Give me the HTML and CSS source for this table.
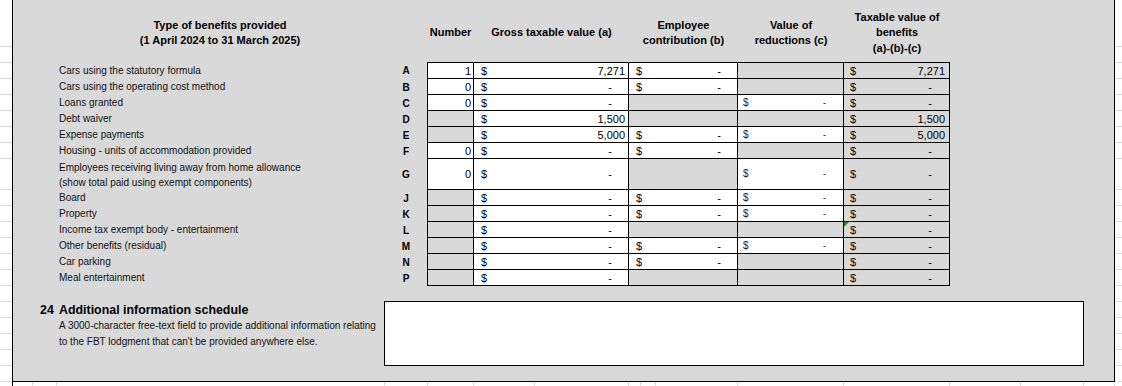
FILE: index.html
```html
<!DOCTYPE html>
<html lang="en">
<head>
<meta charset="utf-8">
<title>FBT benefits schedule</title>
<link rel="stylesheet" href="styles.css">
</head>
<body>
<div class="sheet">
  <div class="top">
    <div class="gutter">
      <div class="gr first"></div>
      <div class="gr"></div><div class="gr"></div><div class="gr"></div><div class="gr"></div><div class="gr"></div><div class="gr"></div><div class="gr"></div>
      <div class="gr tall"></div>
      <div class="gr"></div><div class="gr"></div><div class="gr"></div><div class="gr"></div><div class="gr"></div><div class="gr"></div>
      <div class="gr"></div><div class="gr"></div><div class="gr"></div><div class="gr"></div><div class="gr"></div><div class="gr"></div>
    </div>

    <div class="form">
      <div class="tbl">
        <div class="row head">
          <div class="h h-type">Type of benefits provided<br>(1 April 2024 to 31 March 2025)</div>
          <div class="h">Number</div>
          <div class="h">Gross taxable value (a)</div>
          <div class="h">Employee<br>contribution (b)</div>
          <div class="h">Value of<br>reductions (c)</div>
          <div class="h">Taxable value of<br>benefits<br>(a)-(b)-(c)</div>
        </div>

        <div class="row first">
          <div class="lbl">Cars using the statutory formula</div>
          <div class="let">A</div>
          <div class="c n w">1</div>
          <div class="c gv w"><span>$</span><span>7,271</span></div>
          <div class="c em w"><span>$</span><span class="d">-</span></div>
          <div class="c rd"></div>
          <div class="c tx"><span>$</span><span>7,271</span></div>
        </div>
        <div class="row">
          <div class="lbl">Cars using the operating cost method</div>
          <div class="let">B</div>
          <div class="c n w">0</div>
          <div class="c gv w"><span>$</span><span class="d">-</span></div>
          <div class="c em w"><span>$</span><span class="d">-</span></div>
          <div class="c rd"></div>
          <div class="c tx"><span>$</span><span class="d">-</span></div>
        </div>
        <div class="row">
          <div class="lbl">Loans granted</div>
          <div class="let">C</div>
          <div class="c n w">0</div>
          <div class="c gv w"><span>$</span><span class="d">-</span></div>
          <div class="c em"></div>
          <div class="c rd w"><span class="s">$</span><span class="d sm">-</span></div>
          <div class="c tx"><span>$</span><span class="d">-</span></div>
        </div>
        <div class="row">
          <div class="lbl">Debt waiver</div>
          <div class="let">D</div>
          <div class="c n"></div>
          <div class="c gv w"><span>$</span><span>1,500</span></div>
          <div class="c em"></div>
          <div class="c rd"></div>
          <div class="c tx"><span>$</span><span>1,500</span></div>
        </div>
        <div class="row">
          <div class="lbl">Expense payments</div>
          <div class="let">E</div>
          <div class="c n"></div>
          <div class="c gv w"><span>$</span><span>5,000</span></div>
          <div class="c em w"><span>$</span><span class="d">-</span></div>
          <div class="c rd w"><span class="s">$</span><span class="d sm">-</span></div>
          <div class="c tx"><span>$</span><span>5,000</span></div>
        </div>
        <div class="row">
          <div class="lbl">Housing - units of accommodation provided</div>
          <div class="let">F</div>
          <div class="c n w">0</div>
          <div class="c gv w"><span>$</span><span class="d">-</span></div>
          <div class="c em w"><span>$</span><span class="d">-</span></div>
          <div class="c rd"></div>
          <div class="c tx"><span>$</span><span class="d">-</span></div>
        </div>
        <div class="row tall">
          <div class="lbl two">Employees receiving living away from home allowance<br>(show total paid using exempt components)</div>
          <div class="let">G</div>
          <div class="c n w">0</div>
          <div class="c gv w"><span>$</span><span class="d">-</span></div>
          <div class="c em"></div>
          <div class="c rd w"><span class="s">$</span><span class="d sm">-</span></div>
          <div class="c tx"><span>$</span><span class="d">-</span></div>
        </div>
        <div class="row">
          <div class="lbl">Board</div>
          <div class="let">J</div>
          <div class="c n"></div>
          <div class="c gv w"><span>$</span><span class="d">-</span></div>
          <div class="c em w"><span>$</span><span class="d">-</span></div>
          <div class="c rd w"><span class="s">$</span><span class="d sm">-</span></div>
          <div class="c tx"><span>$</span><span class="d">-</span></div>
        </div>
        <div class="row">
          <div class="lbl">Property</div>
          <div class="let">K</div>
          <div class="c n"></div>
          <div class="c gv w"><span>$</span><span class="d">-</span></div>
          <div class="c em w"><span>$</span><span class="d">-</span></div>
          <div class="c rd w"><span class="s">$</span><span class="d sm">-</span></div>
          <div class="c tx"><span>$</span><span class="d">-</span></div>
        </div>
        <div class="row">
          <div class="lbl">Income tax exempt body - entertainment</div>
          <div class="let">L</div>
          <div class="c n"></div>
          <div class="c gv w"><span>$</span><span class="d">-</span></div>
          <div class="c em"></div>
          <div class="c rd"></div>
          <div class="c tx flag"><span>$</span><span class="d">-</span></div>
        </div>
        <div class="row">
          <div class="lbl">Other benefits (residual)</div>
          <div class="let">M</div>
          <div class="c n"></div>
          <div class="c gv w"><span>$</span><span class="d">-</span></div>
          <div class="c em w"><span>$</span><span class="d">-</span></div>
          <div class="c rd w"><span class="s">$</span><span class="d sm">-</span></div>
          <div class="c tx"><span>$</span><span class="d">-</span></div>
        </div>
        <div class="row">
          <div class="lbl">Car parking</div>
          <div class="let">N</div>
          <div class="c n"></div>
          <div class="c gv w"><span>$</span><span class="d">-</span></div>
          <div class="c em w"><span>$</span><span class="d">-</span></div>
          <div class="c rd"></div>
          <div class="c tx"><span>$</span><span class="d">-</span></div>
        </div>
        <div class="row">
          <div class="lbl">Meal entertainment</div>
          <div class="let">P</div>
          <div class="c n"></div>
          <div class="c gv w"><span>$</span><span class="d">-</span></div>
          <div class="c em"></div>
          <div class="c rd"></div>
          <div class="c tx"><span>$</span><span class="d">-</span></div>
        </div>
      </div>

      <div class="info">
        <div class="info-text">
          <div class="info-head"><span class="info-num">24</span>Additional information schedule</div>
          <div class="info-desc">A 3000-character free-text field to provide additional information relating<br>to the FBT lodgment that can't be provided anywhere else.</div>
        </div>
        <div class="info-box"></div>
      </div>
    </div>

    <div class="gutter right">
      <div class="gr first"></div>
      <div class="gr"></div><div class="gr"></div><div class="gr"></div><div class="gr"></div><div class="gr"></div><div class="gr"></div><div class="gr"></div>
      <div class="gr tall"></div>
      <div class="gr"></div><div class="gr"></div><div class="gr"></div><div class="gr"></div><div class="gr"></div><div class="gr"></div>
      <div class="gr"></div><div class="gr"></div><div class="gr"></div><div class="gr"></div><div class="gr"></div><div class="gr"></div>
    </div>
  </div>

  <div class="strip">
    <div class="sc w13"></div>
    <div class="sc w20"></div>
    <div class="sc w24"></div>
    <div class="sc w328"></div>
    <div class="sc w43"></div>
    <div class="sc w46"></div>
    <div class="sc w61"></div>
    <div class="sc w94"></div>
    <div class="sc w12"></div>
    <div class="sc w15"></div>
    <div class="sc w82"></div>
    <div class="sc w106"></div>
    <div class="sc w106"></div>
    <div class="sc w71"></div>
    <div class="sc w63"></div>
    <div class="sc w31"></div>
  </div>
</div>
</body>
</html>
```

FILE: styles.css
```css
* { box-sizing: border-box; }

html, body {
  margin: 0;
  padding: 0;
  background: #fff;
}

body {
  width: 1122px;
  height: 386px;
  overflow: hidden;
  font-family: "Liberation Sans", Arial, sans-serif;
  color: #000;
}

.top {
  display: flex;
  height: 382px;
}

/* spreadsheet gridlines outside the form */
.gutter {
  width: 12px;
  flex: none;
  display: flex;
  flex-direction: column;
}
.gutter.right {
  flex: 1;
  width: auto;
}
.gr {
  height: 16px;
  border-bottom: 1px solid #dcdcdc;
}
.gr.first { height: 47px; }
.gr.tall { height: 31px; }

/* grey form area */
.form {
  width: 1103px;
  flex: none;
  height: 382px;
  background: #d9d9d9;
  border-left: 1px solid #000;
  border-right: 1px solid #000;
  border-bottom: 1px solid #000;
}

.tbl {
  display: flex;
  flex-direction: column;
}

.row {
  display: grid;
  grid-template-columns: 372px 42px 47px 155px 109px 106px 106px;
  height: 16px;
}
.row.first { height: 17px; }
.row.tall { height: 31px; }
.row.head { height: 62px; }

.h {
  display: flex;
  flex-direction: column;
  justify-content: center;
  align-items: center;
  text-align: center;
  padding-top: 4px;
  font-weight: bold;
  font-size: 11px;
  line-height: 15.5px;
  white-space: nowrap;
}
.h-type { grid-column: span 2; }

.lbl {
  padding-left: 46px;
  font-size: 10px;
  line-height: 16px;
  white-space: nowrap;
  color: #111;
  display: flex;
  align-items: center;
}
.lbl.two { line-height: 15px; }

.let {
  display: flex;
  align-items: center;
  justify-content: center;
  font-weight: bold;
  font-size: 10px;
}

/* data cells */
.c {
  display: flex;
  align-items: center;
  justify-content: space-between;
  border-right: 1px solid #000;
  border-bottom: 1px solid #000;
  font-size: 11px;
  line-height: 14px;
  white-space: nowrap;
}
.row.first .c { border-top: 1px solid #000; }
.c.w { background: #fff; }
.c.n {
  border-left: 1px solid #000;
  justify-content: flex-end;
  padding-right: 2px;
}
.c.gv { padding: 0 3px 0 7px; }
.c.em { padding: 0 3px 0 7px; }
.c.rd { padding: 0 3px 0 5px; }
.c.tx { padding: 0 4px 0 6px; }
.d { margin-right: 13px; }
.d.sm { font-size: 9px; margin-right: 14px; }
.s { font-size: 10px; color: #222; }

.flag { position: relative; }
.flag::before {
  content: "";
  position: absolute;
  left: 0;
  top: 0;
  border-top: 5px solid #1f8a1f;
  border-right: 5px solid transparent;
}

/* additional information */
.info {
  display: flex;
  margin-top: 15px;
}
.info-text {
  width: 371px;
  flex: none;
  padding-top: 1px;
}
.info-head {
  padding-left: 27px;
  font-size: 12.4px;
  font-weight: bold;
  line-height: 16px;
  white-space: nowrap;
}
.info-num {
  display: inline-block;
  width: 19px;
}
.info-desc {
  padding-left: 46px;
  font-size: 10px;
  line-height: 16px;
  white-space: nowrap;
  color: #111;
}
.info-box {
  width: 700px;
  height: 65px;
  background: #fff;
  border: 1px solid #000;
}

/* gridlines below the form */
.strip {
  display: flex;
  height: 4px;
}
.sc {
  flex: none;
  height: 4px;
  border-right: 1px solid #dcdcdc;
}
.w12 { width: 12px; }
.w13 { width: 13px; border-right-color: #000; }
.w15 { width: 15px; }
.w20 { width: 20px; }
.w24 { width: 24px; }
.w31 { width: 31px; }
.w43 { width: 43px; }
.w46 { width: 46px; }
.w61 { width: 61px; }
.w63 { width: 63px; }
.w71 { width: 71px; }
.w82 { width: 82px; }
.w94 { width: 94px; }
.w106 { width: 106px; }
.w328 { width: 328px; }
```
